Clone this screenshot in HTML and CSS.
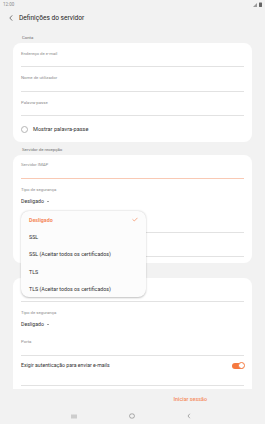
FILE: index.html
```html
<!DOCTYPE html>
<html lang="pt">
<head>
    <meta charset="UTF-8">
    <meta name="viewport" content="width=device-width, initial-scale=1.0">
    <title>Definições do servidor</title>
    <link rel="stylesheet" href="styles.css">
</head>
<body>
    <div class="screen">
        <!-- Barra de estado -->
        <div class="status">
            <span>12:00</span>
            <span class="status-icons">
                <svg width="5" height="4" viewBox="0 0 5 4"><path d="M0 4 L4 0 L4 4 Z" fill="#9a9a9a"/></svg>
                <svg width="3" height="5" viewBox="0 0 3 5"><rect x="0" y="0.5" width="3" height="4.5" rx="0.4" fill="#666"/></svg>
            </span>
        </div>

        <!-- Cabeçalho -->
        <div class="header">
            <svg class="back" width="4" height="6" viewBox="0 0 4 6"><path d="M3.2 0.4 L0.8 3 L3.2 5.6" fill="none" stroke="#444" stroke-width="0.7"/></svg>
            <h1>Definições do servidor</h1>
        </div>

        <!-- Conteúdo -->
        <div class="content">
            <div class="section-label first">Conta</div>
            <div class="card">
                <div class="field"><span class="label">Endereço de e-mail</span></div>
                <div class="field tall"><span class="label">Nome de utilizador</span></div>
                <div class="field"><span class="label">Palavra-passe</span></div>
                <div class="check-row">
                    <span class="checkbox"></span>
                    <span>Mostrar palavra-passe</span>
                </div>
            </div>

            <div class="section-label">Servidor de recepção</div>
            <div class="card card-2">
                <div class="field focus"><span class="label">Servidor IMAP</span></div>
                <div class="select-block">
                    <span class="label">Tipo de segurança</span>
                    <span class="select">Desligado <i class="caret"></i></span>
                </div>
                <!-- campos tapados pelo menu -->
                <div class="field short"></div>
                <div class="field"></div>
            </div>

            <div class="section-label gap"></div>
            <div class="card">
                <div class="field"></div>
                <div class="select-block">
                    <span class="label">Tipo de segurança</span>
                    <span class="select">Desligado <i class="caret"></i></span>
                </div>
                <div class="field short"><span class="label">Porta</span></div>
                <div class="switch-row">
                    <span>Exigir autenticação para enviar e-mails</span>
                    <span class="toggle"><span class="knob"></span></span>
                </div>
                <div class="field"></div>
            </div>
        </div>

        <!-- Botão inferior -->
        <div class="bottom-bar">
            <span class="action">Iniciar sessão</span>
        </div>

        <!-- Navegação -->
        <div class="nav">
            <svg width="6" height="5" viewBox="0 0 6 5"><path d="M1 0.5 V4.5 M3 0.5 V4.5 M5 0.5 V4.5" stroke="#777" stroke-width="0.6"/></svg>
            <svg width="6" height="6" viewBox="0 0 6 6"><rect x="0.6" y="0.9" width="4.8" height="4.2" rx="1.8" fill="none" stroke="#777" stroke-width="0.6"/></svg>
            <svg width="4" height="6" viewBox="0 0 4 6"><path d="M2.8 0.8 L1 3 L2.8 5.2" fill="none" stroke="#777" stroke-width="0.6"/></svg>
        </div>

        <!-- Menu suspenso aberto -->
        <div class="dropdown">
            <div class="option selected">
                <span>Desligado</span>
                <svg width="6" height="5" viewBox="0 0 6 5"><path d="M0.5 2.3 L2.3 4 L5.5 0.8" fill="none" stroke="#f5895a" stroke-width="0.7"/></svg>
            </div>
            <div class="option">SSL</div>
            <div class="option">SSL (Aceitar todos os certificados)</div>
            <div class="option">TLS</div>
            <div class="option">TLS (Aceitar todos os certificados)</div>
        </div>
    </div>
</body>
</html>
```

FILE: styles.css
```css
body {
    margin: 0;
    padding: 0;
    font-family: Roboto, "Noto Sans", sans-serif;
    background-color: #f2f2f2;
    color: #222;
}
.screen {
    position: relative;
    width: 265px;
    height: 424px;
    display: flex;
    flex-direction: column;
    overflow: hidden;
}

/* Barra de estado */
.status {
    height: 9px;
    padding: 0 3px 0 3px;
    display: flex;
    justify-content: space-between;
    align-items: center;
    font-size: 4.5px;
    color: #8a8a8a;
}
.status-icons {
    display: flex;
    align-items: center;
    gap: 1px;
}

/* Cabeçalho */
.header {
    height: 18px;
    display: flex;
    align-items: center;
    padding-left: 9px;
}
.header .back {
    margin-right: 6px;
}
.header h1 {
    margin: 0;
    font-size: 6.6px;
    font-weight: 400;
    color: #222;
}

/* Conteúdo */
.content {
    height: 362px;
    overflow: hidden;
    padding: 0 13px;
}
.section-label {
    height: 6px;
    font-size: 4.3px;
    line-height: 6px;
    color: #6f6f6f;
    padding: 5px 0 2px 9px;
}
.section-label.first {
    padding-top: 8px;
}
.section-label.gap {
    padding-top: 7px;
}
.card {
    background-color: #fff;
    border-radius: 8px;
    padding: 0 8px;
}
.card-2 {
    padding-bottom: 6px;
}
.field {
    border-bottom: 1px solid #e2e2e2;
    padding-top: 8px;
    box-sizing: border-box;
    height: 24px;
}
.field.tall {
    height: 25px;
}
.field.short {
    height: 23px;
    padding-top: 6px;
}
.field.focus {
    padding-top: 7px;
    border-bottom-color: #f9c9b4;
}
.label {
    display: block;
    font-size: 4.3px;
    line-height: 6px;
    color: #8c8c8c;
}
.check-row {
    height: 26px;
    display: flex;
    align-items: center;
    gap: 5px;
    font-size: 5.6px;
    color: #333;
}
.checkbox {
    width: 5px;
    height: 5px;
    border: 0.7px solid #b5b5b5;
    border-radius: 50%;
}
.select-block {
    height: 31px;
    padding-top: 8px;
    box-sizing: border-box;
}
.select {
    display: flex;
    align-items: center;
    gap: 3px;
    margin-top: 5px;
    font-size: 5.2px;
    line-height: 6px;
    color: #333;
}
.caret {
    width: 0;
    height: 0;
    border-left: 1.4px solid transparent;
    border-right: 1.4px solid transparent;
    border-top: 1.8px solid #444;
}
.switch-row {
    height: 30px;
    border-bottom: 1px solid #e2e2e2;
    box-sizing: border-box;
    display: flex;
    justify-content: space-between;
    align-items: flex-start;
    padding-top: 6px;
    font-size: 5.2px;
    line-height: 6px;
    color: #333;
}
.toggle {
    position: relative;
    width: 12px;
    height: 6px;
    margin-top: 0.5px;
    border-radius: 3px;
    background-color: #f5793f;
}
.toggle .knob {
    position: absolute;
    right: -0.5px;
    top: -0.5px;
    width: 5px;
    height: 5px;
    border: 1px solid #f5793f;
    border-radius: 50%;
    background-color: #fff;
}

/* Botão inferior */
.bottom-bar {
    height: 19px;
    display: flex;
    justify-content: flex-end;
    align-items: center;
    padding-right: 58px;
}
.action {
    font-size: 5.4px;
    font-weight: 500;
    color: #f58a5c;
}

/* Navegação */
.nav {
    height: 16px;
    display: flex;
    align-items: center;
    padding-left: 71px;
    gap: 52px;
}

/* Menu suspenso */
.dropdown {
    position: absolute;
    left: 21px;
    top: 211px;
    width: 125px;
    height: 86px;
    box-sizing: border-box;
    padding: 0 8px;
    background-color: #fcfcfc;
    border-radius: 8px;
    box-shadow: 0 0.5px 2px rgba(0, 0, 0, 0.25);
}
.option {
    height: 17.3px;
    display: flex;
    align-items: center;
    justify-content: space-between;
    font-size: 5.3px;
    color: #333;
}
.option.selected {
    color: #f58a5c;
    font-weight: 700;
}
```
